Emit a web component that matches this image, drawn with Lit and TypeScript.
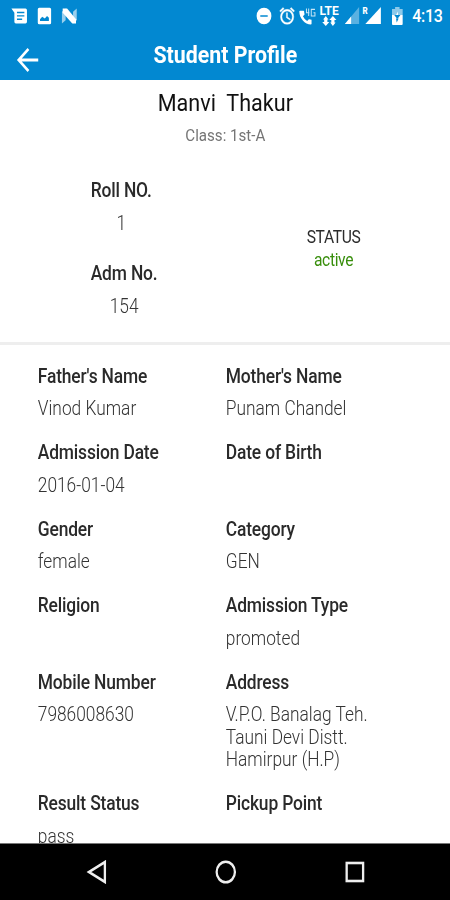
import { LitElement, html, css } from "lit";
import { customElement } from "lit/decorators.js";

interface Field {
  label: string;
  lines: string[];
}

const FIELDS: Field[] = [
  { label: "Father's Name", lines: ["Vinod Kumar"] },
  { label: "Mother's Name", lines: ["Punam Chandel"] },
  { label: "Admission Date", lines: ["2016-01-04"] },
  { label: "Date of Birth", lines: [] },
  { label: "Gender", lines: ["female"] },
  { label: "Category", lines: ["GEN"] },
  { label: "Religion", lines: [] },
  { label: "Admission Type", lines: ["promoted"] },
  { label: "Mobile Number", lines: ["7986008630"] },
  { label: "Address", lines: ["V.P.O. Banalag Teh.", "Tauni Devi Distt.", "Hamirpur (H.P)"] },
  { label: "Result Status", lines: ["pass"] },
  { label: "Pickup Point", lines: [] },
];

@customElement("status-bar")
export class StatusBar extends LitElement {
  static styles = css`
    :host { display: flex; align-items: center; height: 31px; padding: 0 9px 0 12px; color: #fff; box-sizing: border-box; }
    svg { display: block; flex: none; fill: currentColor; overflow: visible; }
    .left { display: flex; gap: 8px; flex: 1; }
    .right { display: flex; align-items: center; }
    .alarm { margin-left: 6px; }
    .call { margin-left: 3px; }
    .lte { width: 23px; margin-left: 3px; height: 21px; display: flex; flex-direction: column; align-items: center; }
    .lte-text { font-size: 13.5px; line-height: 11px; font-weight: 700; height: 11px; }
    .sig { margin-left: 6px; }
    .roam { margin-left: 5px; display: flex; align-items: flex-start; position: relative; }
    .r { position: absolute; left: -1px; top: 0; font-size: 9px; line-height: 9px; font-weight: 900; }
    .bat { margin-left: 12px; }
    .clock { margin-left: 11px; font-size: 18px; line-height: 22px; font-weight: 500; letter-spacing: -0.3px; }
  `;

  render() {
    return html`
      <div class="left">
        <svg width="20" height="20" viewBox="0 0 24 24"><path fill-rule="evenodd" d="M1 3h19q2 0 2 2v14q0 2-2 2H7q-2 0-2-2V8zM8.500 7v1.700h10V7zM8.500 11v1.700h10v-1.700zM8.500 15v1.700h7v-1.700z"/></svg>
        <svg width="20" height="20" viewBox="0 0 24 24"><path fill-rule="evenodd" d="M5 2h14q2 0 2 2v16q0 2-2 2H5q-2 0-2-2V4q0-2 2-2zM6 18h12v-4l-2.500-2-3 3-3.500-2-3 3z"/></svg>
        <svg width="20" height="20" viewBox="0 0 24 24"><path opacity=".6" d="M2 7l5-4v14l-5 4zM17 7l5-4v14l-5 4z"/><path d="M3 3h6l12 13v5h-5L3 8z"/></svg>
      </div>
      <div class="right">
        <svg width="20" height="20" viewBox="0 0 24 24"><path fill-rule="evenodd" d="M12 2a10 10 0 1 0 0 20 10 10 0 0 0 0-20zM7 11h10v2H7z"/></svg>
        <svg class="alarm" width="20" height="20" viewBox="0 0 24 24"><path stroke="currentColor" stroke-width=".5" d="M22 5.720l-4.600-3.860-1.290 1.530 4.600 3.860zM7.880 3.390L6.600 1.860 2 5.710l1.290 1.530zM12.500 8H11v6l4.750 2.850.75-1.230-4-2.370zM12 4a9 9 0 1 0 0 18 9 9 0 0 0 0-18zm0 16a7 7 0 1 1 0-14 7 7 0 0 1 0 14z"/></svg>
        <svg class="call" width="20" height="20" viewBox="0 0 24 24"><path transform="translate(0 3) scale(.87)" d="M20 15.500c-1.250 0-2.450-.2-3.570-.57-.35-.11-.74-.03-1.020.24l-2.200 2.200a15 15 0 0 1-6.590-6.590l2.200-2.210c.28-.26.36-.65.25-1A11.400 11.400 0 0 1 8.500 4c0-.55-.45-1-1-1H2c-.55 0-1 .45-1 1 0 9.390 8.610 18 18 18 .55 0 1-.45 1-1z"/><path fill="none" stroke="currentColor" stroke-width="1.300" opacity=".8" d="M10.500 3v5h4M13.500 3v9M22 4h-5v8h5V8h-2"/></svg>
        <div class="lte">
          <span class="lte-text">LTE</span>
          <svg width="19" height="10" viewBox="0 0 18 10"><path d="M5 0l3 3.500H6.800V6H9L5 10 1 6h2.200V3.500H2zM13 0l4 4h-2.200V6.500H16L13 10l-3-3.500h1.200V4H9z"/></svg>
        </div>
        <svg class="sig" width="16" height="17" viewBox="0 0 16 17"><path opacity=".35" d="M16 0v17H0z"/><path d="M7 9.500V17H0z"/></svg>
        <div class="roam">
          <svg width="20" height="17" viewBox="0 0 20 17"><path d="M19.500 0v17H2z"/></svg><span class="r">R</span>
        </div>
        <svg class="bat" width="12" height="18" viewBox="0 0 12 18"><path opacity=".55" d="M3.500 0h5v2H12v6H0V2h3.500z"/><path fill-rule="evenodd" d="M0 8h2.500L6 12l3.500-4H12v9q0 1-1 1H1q-1 0-1-1zM5.300 15.500l2.200-4h-3z"/><path d="M6.700 4.500V8H4.500z"/></svg>
        <span class="clock">4:13</span>
      </div>
    `;
  }
}

@customElement("app-root")
export class AppRoot extends LitElement {
  static styles = css`
    :host { display: block; width: 450px; height: 900px; overflow: hidden; background: #fff; font-family: Roboto, sans-serif; }
    /* The 9:16 screen is condensed horizontally to fit the 1:2 window. */
    .screen { width: 507px; height: 900px; display: flex; flex-direction: column; transform: scaleX(0.88889); transform-origin: 0 0; color: #2b2b2b; }
    .top { flex: none; height: 79.5px; background: #0288d1; color: #fff; }
    .bar { display: grid; grid-template-columns: 60px 1fr 60px; align-items: center; height: 48px; }
    .back { display: block; margin: 9px 0 0 18px; }
    .title { text-align: center; font-size: 24px; line-height: 28px; font-weight: 700; }
    .summary { flex: none; height: 265px; box-sizing: border-box; border-bottom: 3px solid #eee; padding-top: 8.5px; text-align: center; }
    .name { font-size: 24.3px; line-height: 30px; color: #111; white-space: pre; }
    .class { margin-top: 7px; font-size: 17px; line-height: 20px; color: #757575; }
    .stats { display: grid; grid-template-columns: 1fr 1fr; align-items: center; margin-top: 35px; }
    .ids { display: flex; flex-direction: column; align-items: flex-start; padding-left: 102px; }
    .id { display: flex; flex-direction: column; align-items: center; gap: 10px; }
    .id + .id { margin-top: 28px; }
    .label { font-size: 19.6px; line-height: 22.5px; letter-spacing: -0.18px; font-weight: 500; color: #2a2a2a; }
    .value { font-size: 19.5px; line-height: 22.5px; font-weight: 300; color: #333; white-space: nowrap; }
    .status { padding-right: 10px; padding-bottom: 1px; font-size: 17.6px; letter-spacing: -0.4px; line-height: 22.5px; }
    .active { color: #388e0c; }
    .fields { flex: 1; min-height: 0; overflow: hidden; display: grid; grid-template-columns: 211.5px 1fr; align-content: start; row-gap: 21.6px; padding: 21.3px 0 0 42.5px; }
    .field { display: flex; flex-direction: column; gap: 9.9px; }
    .nav { flex: none; height: 57px; background: #000; border-top: 1px solid #777; box-sizing: border-box; display: grid; grid-template-columns: 1fr 1fr 1fr; align-items: center; padding: 0 35px 0 36px; }
    .nav svg { display: block; margin: 0 auto; fill: none; stroke: #eee; stroke-width: 2.6; }
  `;

  render() {
    return html`
      <div class="screen">
        <header class="top">
          <status-bar></status-bar>
          <div class="bar">
            <svg class="back" width="26" height="26" viewBox="0 0 26 26" fill="none" stroke="#fff" stroke-width="2.800"><path d="M25 13H3M14 2L3 13l11 11"/></svg>
            <div class="title">Student Profile</div>
          </div>
        </header>
        <section class="summary">
          <div class="name">Manvi  Thakur</div>
          <div class="class">Class: 1st-A</div>
          <div class="stats">
            <div class="ids">
              <div class="id"><span class="label">Roll NO.</span><span class="value">1</span></div>
              <div class="id"><span class="label">Adm No.</span><span class="value">154</span></div>
            </div>
            <div class="status"><div>STATUS</div><div class="active">active</div></div>
          </div>
        </section>
        <section class="fields">
          ${FIELDS.map((f) => html`
            <div class="field">
              <div class="label">${f.label}</div>
              <div>${f.lines.map((l) => html`<div class="value">${l}</div>`)}</div>
            </div>`)}
        </section>
        <nav class="nav">
          <svg width="24" height="24" viewBox="0 0 24 24"><path d="M21 2v20L3 12z"/></svg>
          <svg width="24" height="24" viewBox="0 0 24 24"><circle cx="12" cy="12" r="10.300"/></svg>
          <svg width="24" height="24" viewBox="0 0 24 24"><rect x="3" y="3" width="18.500" height="18"/></svg>
        </nav>
      </div>
    `;
  }
}
